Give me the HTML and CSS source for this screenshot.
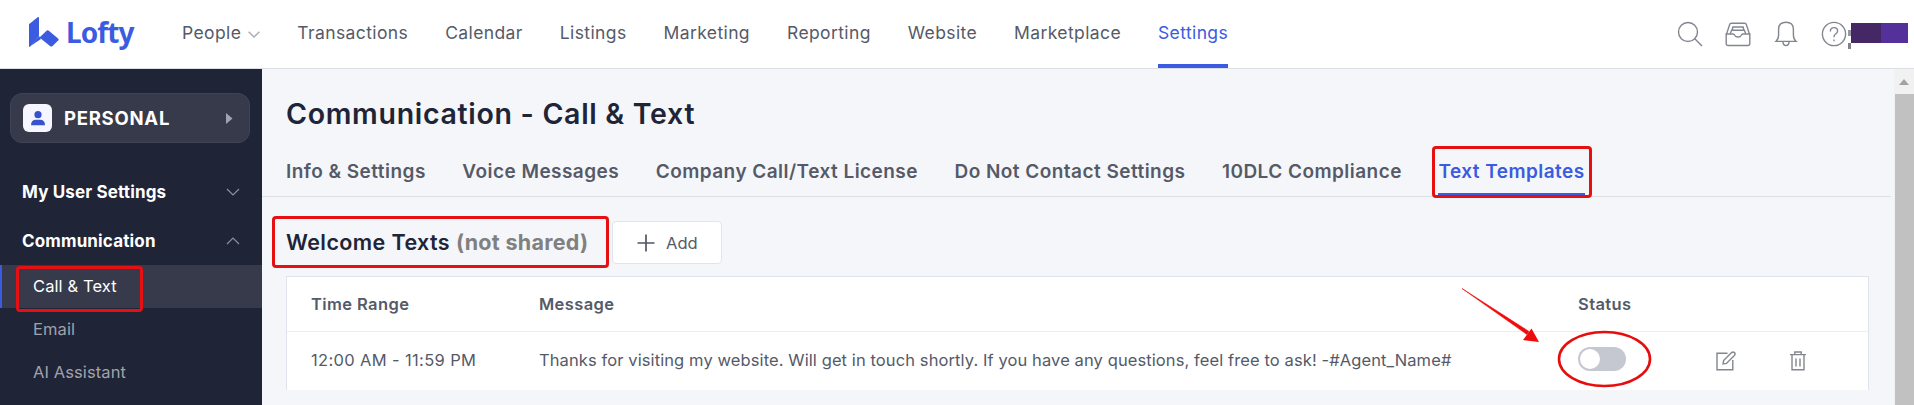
FILE: index.html
```html
<!DOCTYPE html>
<html lang="en">
<head>
    <meta charset="UTF-8">
    <title>Lofty - Settings</title>
    <link rel="stylesheet" href="styles.css">
</head>
<body>
    <header class="header">
        <a class="logo">
            <svg class="logo-mark" width="30" height="30" viewBox="0 0 30 30">
                <path d="M0 7.2 8.6.3Q10 -.4 10 1.2V19L.9 29.8Q0 30.4 0 29Z" fill="#3b5be0"/>
                <path d="M10.5 20.5 17.8 13.6Q18.8 12.9 19.8 13.7L29.3 21.8Q30 22.5 29.3 23.2L23.3 29.2Q22.3 30 21.3 29.2Z" fill="#3b5be0"/>
                <path d="M0 30 10 19 12 22Z" fill="#3b5be0"/>
            </svg>
            <span>Lofty</span>
        </a>
        <nav class="nav">
            <a class="nav-item">People
                <svg width="12" height="7" viewBox="0 0 12 7"><path d="M.6.8 6 6 11.4.8" fill="none" stroke="#a8abb5" stroke-width="1.4"/></svg>
            </a>
            <a class="nav-item">Transactions</a>
            <a class="nav-item">Calendar</a>
            <a class="nav-item">Listings</a>
            <a class="nav-item">Marketing</a>
            <a class="nav-item">Reporting</a>
            <a class="nav-item">Website</a>
            <a class="nav-item">Marketplace</a>
            <a class="nav-item active">Settings</a>
        </nav>
        <div class="tools">
            <svg width="26" height="26" viewBox="0 0 26 26"><circle cx="11" cy="11" r="9.5"/><path d="M17.8 17.8 25 25"/></svg>
            <svg width="26" height="26" viewBox="0 0 26 26"><path d="M1.6 13 4.6 3.6Q5 2.2 6.4 2.2H19.6Q21 2.2 21.4 3.6L24.4 13"/><path d="M5.3 12.8 6.6 9.3H19.4L20.7 12.8M7.1 9.3 7.9 6H18.1L18.9 9.3"/><path d="M1.2 13H8.2Q9.2 13 9.7 14.2 10.6 16 13 16T16.3 14.2Q16.8 13 17.8 13H24.8V22.5Q24.8 24.5 22.8 24.5H3.2Q1.2 24.5 1.2 22.5Z"/></svg>
            <svg width="26" height="26" viewBox="0 0 26 26"><path d="M2.9 20.4Q5.6 18 5.6 14V8.2Q5.6 1.2 13 1.2T20.4 8.2V14Q20.4 18 23.1 20.4ZM9.8 20.7Q10.3 24.6 13 24.6T16.2 20.7"/></svg>
            <svg width="26" height="26" viewBox="0 0 26 26"><circle cx="13" cy="13" r="11.6"/><path d="M9.4 10.4Q9.4 6.6 13 6.6T16.6 10Q16.6 11.7 14.6 13 13 14 13 16.2M13 18.6V20.2"/></svg>
        </div>
        <div class="account">
            <span class="account-dots"></span>
            <span class="account-block"></span>
        </div>
    </header>

    <div class="page">
        <aside class="sidebar">
            <div class="scope">
                <span class="scope-icon">
                    <svg width="14" height="15" viewBox="0 0 14 15"><circle cx="7" cy="3.7" r="3.6" fill="#3653cb"/><path d="M0 14.2Q0 8.7 5 8.7H9Q14 8.7 14 14.2Z" fill="#3653cb"/></svg>
                </span>
                <span class="scope-name">PERSONAL</span>
                <svg width="7" height="11" viewBox="0 0 7 11"><path d="M0 0 6.5 5.5 0 11Z" fill="#a0a3af"/></svg>
            </div>
            <div class="group">
                <span>My User Settings</span>
                <svg width="14" height="8" viewBox="0 0 14 8"><path d="M1 1 7 7 13 1" fill="none" stroke="#8d909c" stroke-width="1.2"/></svg>
            </div>
            <div class="group">
                <span>Communication</span>
                <svg width="14" height="8" viewBox="0 0 14 8"><path d="M1 7 7 1 13 7" fill="none" stroke="#8d909c" stroke-width="1.2"/></svg>
            </div>
            <a class="sub active">Call &amp; Text</a>
            <a class="sub">Email</a>
            <a class="sub">AI Assistant</a>
        </aside>

        <main class="main">
            <h1>Communication - Call &amp; Text</h1>
            <div class="tabs">
                <a class="tab">Info &amp; Settings</a>
                <a class="tab">Voice Messages</a>
                <a class="tab">Company Call/Text License</a>
                <a class="tab">Do Not Contact Settings</a>
                <a class="tab">10DLC Compliance</a>
                <a class="tab active">Text Templates</a>
            </div>
            <div class="section-head">
                <h2>Welcome Texts <span>(not shared)</span></h2>
                <button class="add">
                    <svg width="18" height="18" viewBox="0 0 18 18"><path d="M9 .5V17.5M.5 9H17.5" stroke="#515666" stroke-width="1.7"/></svg>
                    Add
                </button>
            </div>
            <div class="table">
                <div class="row head">
                    <span>Time Range</span>
                    <span>Message</span>
                    <span>Status</span>
                </div>
                <div class="row">
                    <span>12:00 AM - 11:59 PM</span>
                    <span class="message">Thanks for visiting my website. Will get in touch shortly. If you have any questions, feel free to ask! -#Agent_Name#</span>
                    <span class="switch"></span>
                    <svg class="action" width="20" height="20" viewBox="0 0 20 20"><path d="M11.5 2.2H1V18.8H16.8V9M7 13 7.6 9.6 15.6 1.6Q17 .4 18.4 1.6T18.4 4.4L10.4 12.4Z"/></svg>
                    <svg class="action" width="18" height="20" viewBox="0 0 18 20"><path d="M1 3.6H17M5.8 3.4V1H12.2V3.4M3 3.8V18.8H15V3.8M7 7.5V15.5M11 7.5V15.5"/></svg>
                </div>
            </div>
        </main>

        <div class="scrollbar">
            <span class="scroll-up"></span>
            <span class="scroll-thumb"></span>
        </div>
    </div>

    <!-- callouts -->
    <div class="mark mark-menu"></div>
    <div class="mark mark-tab"></div>
    <div class="mark mark-title"></div>
    <svg class="mark-status" width="200" height="110" viewBox="0 0 200 110">
        <path d="M2 8.5 69 51.5 67 54.5Z" fill="#f00b0b" stroke="#f00b0b" stroke-width=".6"/>
        <path d="M79 62 63 60 71.500 48.500Z" fill="#f00b0b"/>
        <ellipse cx="144.500" cy="79" rx="45.500" ry="27" fill="none" stroke="#e80d0d" stroke-width="2.6"/>
    </svg>
</body>
</html>
```
FILE: styles.css
```css
* {
    box-sizing: border-box;
}
body {
    margin: 0;
    height: 405px;
    overflow: hidden;
    position: relative;
    background-color: #f5f6fa;
    font-family: Inter, "Liberation Sans", sans-serif;
    color: #555a68;
}
svg {
    display: block;
    flex: none;
}
h1, h2 {
    margin: 0;
    color: #202437;
    font-weight: 600;
    white-space: nowrap;
}
.header {
    display: flex;
    height: 69px;
    padding-left: 29px;
    background-color: #fff;
    border-bottom: 1px solid #dcdfe6;
}
.logo {
    display: flex;
    width: 153px;
    padding-top: 17px;
    gap: 7px;
    font-family: "Noto Sans", sans-serif;
    font-size: 28px;
    line-height: 30px;
    font-weight: 700;
    letter-spacing: -0.9px;
    color: #3b5be0;
}
.nav {
    display: flex;
    gap: 37px;
}
.nav-item {
    display: flex;
    gap: 7px;
    height: 68px;
    padding-top: 22px;
    font-size: 17.5px;
    line-height: 22px;
    letter-spacing: 0.39px;
    white-space: nowrap;
}
.nav-item svg {
    margin-top: 9px;
}
.nav-item.active {
    color: #3b5be0;
    border-bottom: 4px solid #3b5be0;
}
.tools {
    display: flex;
    gap: 22px;
    margin-left: auto;
    padding-top: 21px;
}
.tools svg, .action {
    fill: none;
    stroke: #83868f;
    stroke-width: 1.4;
}
.account {
    display: flex;
    width: 67px;
    padding-top: 23px;
    padding-left: 1px;
}
.account-dots {
    width: 3px;
    height: 26px;
    background: linear-gradient(#fff 7px, #9a95a2 7px, #9a95a2 13px, #fff 13px, #fff 20px, #82808c 20px);
}
.account-block {
    width: 57px;
    height: 20px;
    background: linear-gradient(90deg, #452765 30px, #54309a 30px);
}
.page {
    display: flex;
    height: 336px;
}
.sidebar {
    width: 262px;
    padding-top: 24px;
    background-color: #202437;
}
.scope {
    display: flex;
    align-items: center;
    height: 50px;
    margin: 0 12px 24px 10px;
    padding: 0 16px 0 12px;
    background-color: #373a4b;
    border: 1px solid #414454;
    border-radius: 12px;
}
.scope-icon {
    display: flex;
    align-items: center;
    justify-content: center;
    width: 29px;
    height: 28px;
    border-radius: 6px;
    background-color: #f5f6ff;
}
.scope-name {
    flex: 1;
    margin: 0 0 1px 12px;
    font-size: 18.5px;
    font-weight: 700;
    letter-spacing: 0.75px;
    color: #fff;
}
.group {
    display: flex;
    align-items: center;
    justify-content: space-between;
    height: 49px;
    padding: 0 22px;
    font-size: 17px;
    font-weight: 700;
    letter-spacing: 0.15px;
    color: #fff;
}
.sub {
    display: flex;
    align-items: center;
    height: 43px;
    padding: 0 0 2px 33px;
    font-size: 16.5px;
    letter-spacing: 0.1px;
    color: #a0a2ab;
}
.sub.active {
    padding-left: 31px;
    border-left: 2px solid #3b5be0;
    background-color: #373a4b;
    color: #fff;
}
.main {
    flex: 1;
    padding: 27px 0 0 24px;
}
h1 {
    font-size: 28.5px;
    line-height: 36px;
    letter-spacing: 0.7px;
}
.tabs {
    display: flex;
    gap: 36.5px;
    height: 65px;
    margin: 0 3px 0 -24px;
    padding: 28px 0 0 24px;
    border-bottom: 1px solid #dcdfe6;
}
.tab {
    height: 36px;
    padding-top: 1px;
    font-size: 19px;
    line-height: 22px;
    font-weight: 600;
    letter-spacing: 0.46px;
    white-space: nowrap;
}
.tab.active {
    color: #3b5be0;
    border-bottom: 3px solid #3b5be0;
}
.section-head {
    display: flex;
    align-items: center;
    height: 43px;
    margin: 24px 0 12px;
}
h2 {
    width: 326px;
    padding-bottom: 1px;
    font-size: 21.5px;
    letter-spacing: 0.4px;
}
h2 span {
    color: #808080;
    font-weight: 700;
    letter-spacing: 0.3px;
}
.add {
    display: flex;
    align-items: center;
    gap: 11px;
    width: 110px;
    height: 43px;
    padding: 0 0 0 24px;
    border: 1px solid #e2e4ec;
    border-radius: 4px;
    background-color: #fff;
    font-family: inherit;
    font-size: 16.5px;
    color: #555a68;
}
.table {
    width: 1583px;
    border: 1px solid #e1e3ec;
    border-bottom: 0;
    background-color: #fff;
}
.row {
    display: grid;
    grid-template-columns: 228px 1039px 138px 73px 18px;
    align-items: center;
    height: 58px;
    padding-left: 24px;
    font-size: 16.5px;
    letter-spacing: 0.35px;
}
.row span {
    padding-bottom: 2px;
}
.row.head {
    height: 55px;
    border-bottom: 1px solid #eceef3;
    font-weight: 600;
    letter-spacing: 0.4px;
}
.row.head span {
    padding-bottom: 1px;
}
.row .message {
    letter-spacing: 0.1px;
    white-space: nowrap;
}
.row .switch {
    width: 48px;
    height: 24px;
    padding: 2px;
    margin-bottom: 5px;
    border-radius: 12px;
    background-color: #c6c8d1;
}
.switch::before {
    content: "";
    display: block;
    width: 20px;
    height: 20px;
    border-radius: 50%;
    background-color: #fff;
}
.scrollbar {
    width: 20px;
    background-color: #f1f1f1;
}
.scroll-up {
    display: block;
    margin: 10px 0 9px 5px;
    width: 0;
    border: 5.5px solid transparent;
    border-top: 0;
    border-bottom: 6px solid #a3a3a3;
}
.scroll-thumb {
    display: block;
    height: 311px;
    margin-left: 1px;
    background-color: #c1c1c1;
}
.mark {
    position: absolute;
    border: 3px solid #e60f12;
    border-radius: 4px;
}
.mark-menu {
    left: 16px;
    top: 266px;
    width: 127px;
    height: 46px;
}
.mark-tab {
    left: 1432px;
    top: 146px;
    width: 160px;
    height: 52px;
}
.mark-title {
    left: 272px;
    top: 216px;
    width: 337px;
    height: 52px;
}
.mark-status {
    position: absolute;
    left: 1460px;
    top: 280px;
}
```
